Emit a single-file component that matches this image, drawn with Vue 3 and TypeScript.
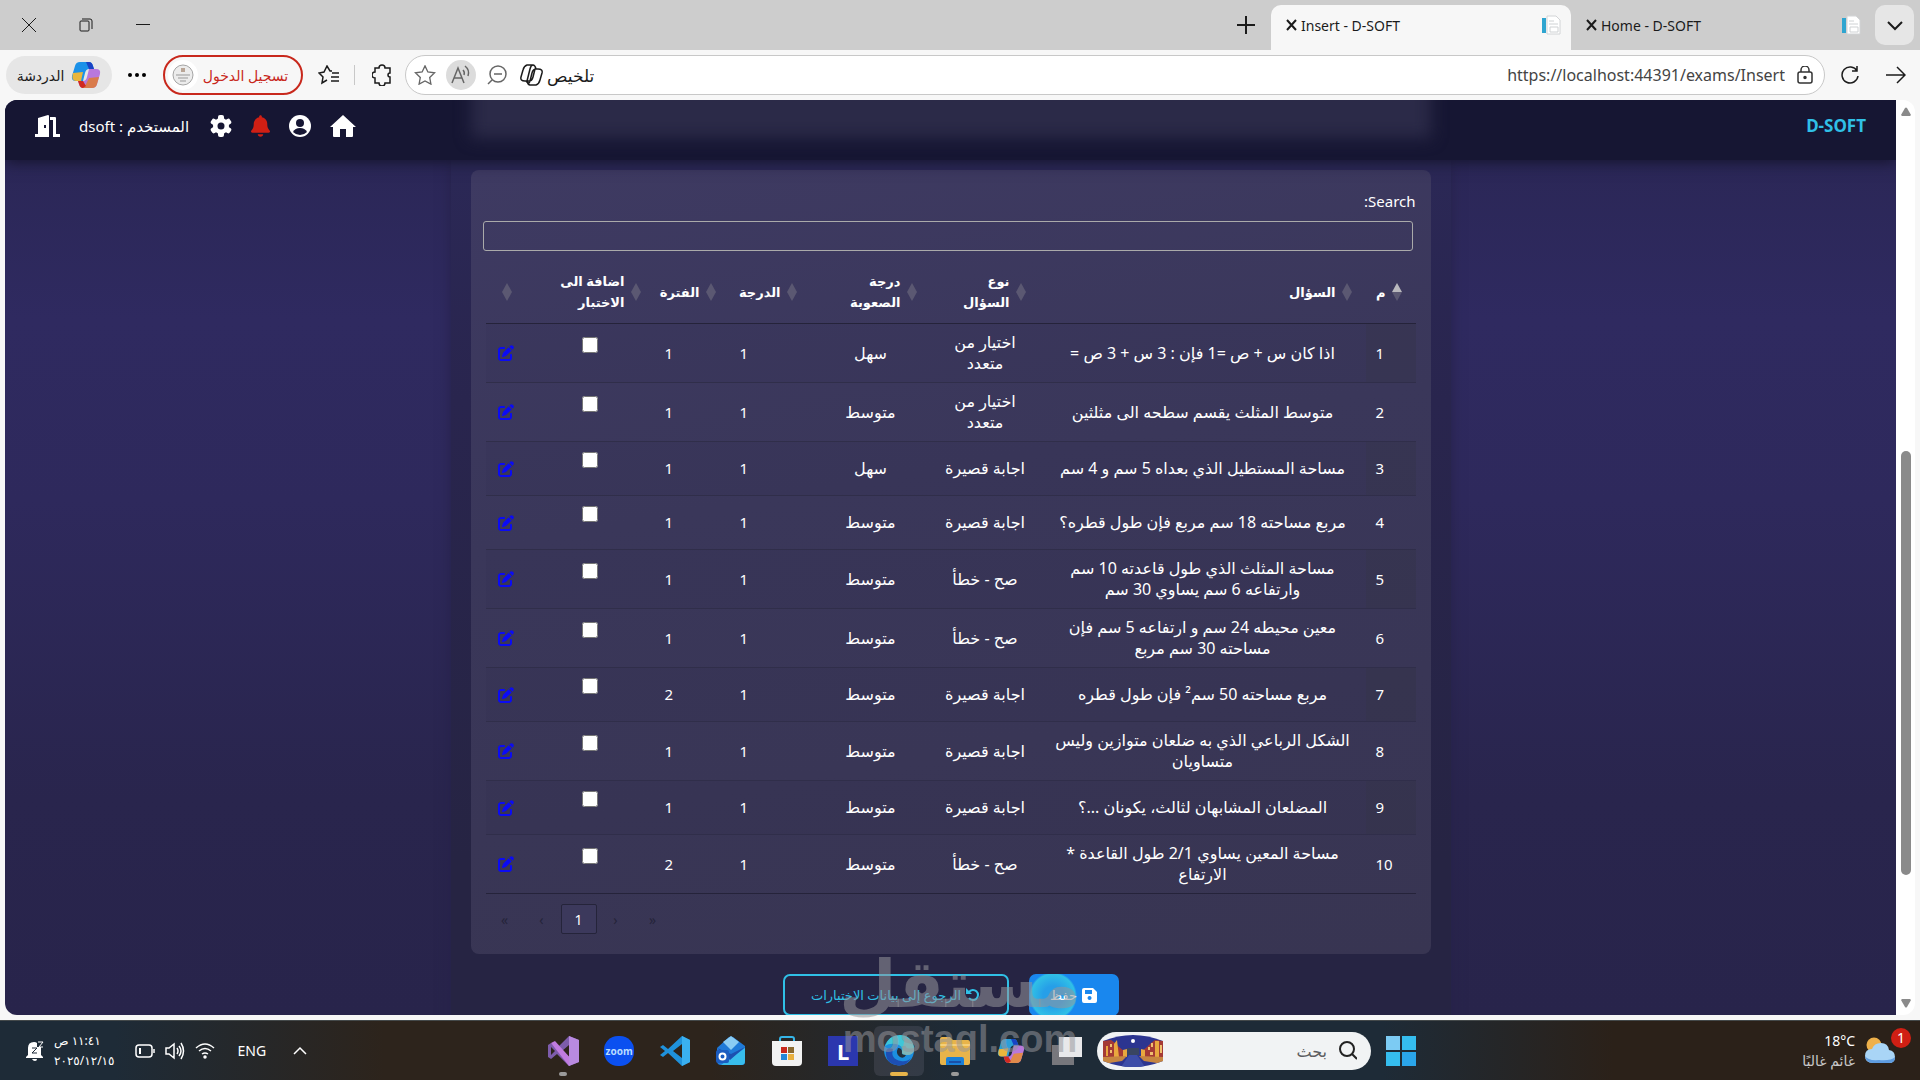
<script setup lang="ts">
interface Question {
  id: number
  text: string
  type: string
  level: string
  degree: number
  period: number
}

const choice = 'اختيار من\nمتعدد'
const short = 'اجابة قصيرة'
const trueFalse = 'صح - خطأ'
const medium = 'متوسط'
const easy = 'سهل'

const questions: Question[] = [
  { id: 1, text: 'اذا كان س + ص =1 فإن : 3 س + 3 ص =', type: choice, level: easy, degree: 1, period: 1 },
  { id: 2, text: 'متوسط المثلث يقسم سطحه الى مثلثين', type: choice, level: medium, degree: 1, period: 1 },
  { id: 3, text: 'مساحة المستطيل الذي بعداه 5 سم و 4 سم', type: short, level: easy, degree: 1, period: 1 },
  { id: 4, text: 'مربع مساحته 18 سم مربع فإن طول قطره؟', type: short, level: medium, degree: 1, period: 1 },
  { id: 5, text: 'مساحة المثلث الذي طول قاعدته 10 سم\nوارتفاعه 6 سم يساوي 30 سم', type: trueFalse, level: medium, degree: 1, period: 1 },
  { id: 6, text: 'معين محيطه 24 سم و ارتفاعه 5 سم فإن\nمساحته 30 سم مربع', type: trueFalse, level: medium, degree: 1, period: 1 },
  { id: 7, text: 'مربع مساحته 50 سم² فإن طول قطره', type: short, level: medium, degree: 1, period: 2 },
  { id: 8, text: 'الشكل الرباعي الذي به ضلعان متوازين وليس\nمتساويان', type: short, level: medium, degree: 1, period: 1 },
  { id: 9, text: 'المضلعان المشابهان لثالث، يكونان ...؟', type: short, level: medium, degree: 1, period: 1 },
  { id: 10, text: 'مساحة المعين يساوي 2/1 طول القاعدة *\nالارتفاع', type: trueFalse, level: medium, degree: 1, period: 2 },
]

const headers: string[] = ['م', 'السؤال', 'نوع\nالسؤال', 'درجة\nالصعوبة', 'الدرجة', 'الفترة', 'اضافة الى\nالاختبار', '']
const tabs = [
  { title: 'Home - D-SOFT', active: false },
  { title: 'Insert - D-SOFT', active: true },
]
</script>

<template>
  <div class="desktop" dir="rtl">
    <header class="tabbar">
      <button class="tab-menu" aria-label="Tabs">
        <svg width="18" height="18" viewBox="0 0 18 18" class="line"><path d="M2 6l7 7 7-7" /></svg>
      </button>
      <div v-for="tab in tabs" :key="tab.title" class="tab" :class="{ active: tab.active }">
        <svg width="20" height="20" viewBox="0 0 20 20">
          <path d="M6 1h9l4 4v14H6z" fill="#fff" stroke="#d2d4d6" />
          <rect x="1" y="3" width="4" height="15" fill="#2fa5d0" />
          <path d="M8 6h5M8 9h9M9 12h8v5H9z" fill="none" stroke="#cfd2d4" />
        </svg>
        <span class="tab-title" dir="ltr">{{ tab.title }}</span>
        <button class="tab-close" aria-label="Close tab">
          <svg width="11" height="12" viewBox="0 0 11 12" class="line"><path d="M1 1l9 10M10 1L1 11" /></svg>
        </button>
      </div>
      <button class="new-tab" aria-label="New tab">
        <svg width="18" height="18" viewBox="0 0 18 18" class="line"><path d="M9 0v18M0 9h18" /></svg>
      </button>
      <div class="window-controls">
        <button aria-label="Minimize"><svg width="14" height="14" viewBox="0 0 14 14" class="line thin"><path d="M0 6.500h14" /></svg></button>
        <button aria-label="Restore"><svg width="14" height="14" viewBox="0 0 14 14" class="line thin"><rect x="1" y="3" width="9" height="10" rx="1" /><path d="M3 1h8q2 0 2 2v8" /></svg></button>
        <button aria-label="Close"><svg width="14" height="14" viewBox="0 0 14 14" class="line thin"><path d="M0 0l14 14M14 0L0 14" /></svg></button>
      </div>
    </header>

    <div class="toolbar">
      <button class="tool" aria-label="Forward">
        <svg width="20" height="18" viewBox="0 0 20 18" class="line"><path d="M0 9h19M11 1l8 8-8 8" /></svg>
      </button>
      <button class="tool reload" aria-label="Reload">
        <svg width="18" height="20" viewBox="0 0 18 20" class="line"><path d="M16 6A8 8 0 1 0 17 11M16 1v5h-5" /></svg>
      </button>
      <div class="address">
        <svg width="16" height="18" viewBox="0 0 16 18" class="line gray"><rect x="1" y="6" width="14" height="11" rx="2" /><path d="M4 6V4a4 4 0 0 1 8 0v2" /><circle cx="8" cy="11.500" r="1" fill="#333" /></svg>
        <input class="url" dir="ltr" aria-label="Address" value="https://localhost:44391/exams/Insert" />
        <button class="summary">
          <span>تلخيص</span>
          <svg width="23" height="22" viewBox="0 0 23 22" class="line"><path d="M7 1h6q2 0 3 4h2q5 0 4 4l-2 7q-1 4-4 5h-6q-2 0-3-4H5q-5 0-4-4l2-7q1-4 4-5zM13 1q-2 0-3 4L7 17M16 5q-3 0-4 4l-2 8q-1 4-4 0M7 17h2q3 0 4-4l2-8" /></svg>
        </button>
        <button class="addr-icon" aria-label="Zoom"><svg width="20" height="20" viewBox="0 0 20 20" class="line soft"><circle cx="11" cy="9" r="8" /><path d="M7 9h8M5 15l-4 4" /></svg></button>
        <button class="addr-icon round" aria-label="Read aloud"><svg width="20" height="20" viewBox="0 0 20 20" class="line soft"><path d="M1 18L7 3l6 15M3 13h8M12 5q2 2 1 5M14 1q5 4 3 10" /></svg></button>
        <button class="addr-icon" aria-label="Favorite"><svg width="22" height="20" viewBox="0 0 24 23" class="line soft"><path d="M12 1l3.300 7 7.700 1-5.600 5.300 1.400 7.700L12 18.300 5.200 22l1.400-7.700L1 9l7.700-1z" /></svg></button>
      </div>
      <button class="tool" aria-label="Extensions">
        <svg width="20" height="22" viewBox="0 0 20 22" class="line"><path d="M7 4a3 3 0 0 1 6 0h5v5a2 2 0 1 0 0 4v6h-5a3 3 0 0 1-6 0H3v-5a3 3 0 0 1 0-6V4z" /></svg>
      </button>
      <span class="divider"></span>
      <button class="tool" aria-label="Favorites">
        <svg width="22" height="20" viewBox="0 0 22 20" class="line"><path d="M14 6h-2L9 1 6 7l-5 1 4 4-1 6 5-3M14 8h7M13 12h8M13 16h8" /></svg>
      </button>
      <button class="signin">
        <span>تسجيل الدخول</span>
        <svg width="30" height="30" viewBox="0 0 30 30"><circle cx="15" cy="15" r="15" fill="#fff" /><circle cx="15" cy="15" r="10" fill="#ececec" stroke="#a5a5a5" /><path d="M13 8h4v4h-4z" fill="#b9a596" /><path d="M8 15h14M10 18h10M12 21h6" stroke="#999" /></svg>
      </button>
      <button class="tool dots" aria-label="More">
        <svg width="18" height="4" viewBox="0 0 18 4"><circle cx="2" cy="2" r="2" /><circle cx="9" cy="2" r="2" /><circle cx="16" cy="2" r="2" /></svg>
      </button>
      <button class="chat">
        <svg width="30" height="28" viewBox="0 0 30 28">
          <path d="M9 1h9q3 0 4 4l1 3h-5q-3 0-4 4l-2 8H5q-5 0-4-5l3-10q1-4 5-4z" fill="#1b91e8" />
          <path d="M2 12l10-1-2 9H5q-5 0-3-8z" fill="#e9b63c" />
          <path d="M18 1q3 0 4 4l1 3h-5l-3-7z" fill="#1943c4" />
          <path d="M21 27h-9q-3 0-4-4l-1-3h5q3 0 4-4l2-8h7q5 0 4 5l-3 10q-1 4-5 4z" fill="#b878dc" />
          <path d="M28 16l-10 1-4 8-3 2h10q4 0 5-4z" fill="#d97b4b" />
          <path d="M7 20h5l3 5-3 2q-3 0-4-4z" fill="#d02a20" />
        </svg>
        <span>الدردشة</span>
      </button>
    </div>

    <div class="frame">
      <div class="page">
        <nav class="navbar">
          <a class="brand" href="#" dir="ltr">D-SOFT</a>
          <div class="nav-items">
            <a href="#" aria-label="الرئيسية"><svg width="26" height="22" viewBox="0 0 26 22" fill="#fff"><path d="M13 0l13 12h-3v9q0 1-1 1h-6v-8h-6v8H4q-1 0-1-1v-9H0z" /></svg></a>
            <a href="#" aria-label="الحساب"><svg width="22" height="22" viewBox="0 0 22 22"><circle cx="11" cy="11" r="11" fill="#fff" /><circle cx="11" cy="8" r="4" fill="#161633" /><path d="M4 17q2-4 7-4t7 4q-3 3-7 3t-7-3z" fill="#161633" /></svg></a>
            <a href="#" aria-label="التنبيهات"><svg width="19" height="22" viewBox="0 0 448 512" fill="#d01f14"><path d="M224 0c-17.700 0-32 14.300-32 32V51.200C119 66 64 130.600 64 208v18.800c0 47-17.300 92.400-48.500 127.600l-7.400 8.300c-8.400 9.400-10.400 22.900-5.300 34.400S19.400 416 32 416H416c12.600 0 24-7.400 29.200-18.900s3.100-25-5.300-34.400l-7.400-8.300C401.300 319.200 384 273.900 384 226.800V208c0-77.400-55-142-128-156.800V32c0-17.700-14.300-32-32-32zm45.300 493.300c12-12 18.700-28.300 18.700-45.300H160c0 17 6.700 33.300 18.700 45.300s28.300 18.700 45.300 18.700 33.300-6.700 45.300-18.700z" /></svg></a>
            <a href="#" aria-label="الاعدادات"><svg width="22" height="22" viewBox="0 0 22 22"><g fill="#fff"><circle cx="11" cy="11" r="8" /><rect x="8" y="0" width="6" height="22" rx="2" /><rect x="8" y="0" width="6" height="22" rx="2" transform="rotate(60 11 11)" /><rect x="8" y="0" width="6" height="22" rx="2" transform="rotate(120 11 11)" /></g><circle cx="11" cy="11" r="3.500" fill="#161633" /></svg></a>
            <span class="user">المستخدم : dsoft</span>
            <a href="#" aria-label="خروج"><svg width="25" height="22" viewBox="0 0 25 22" fill="#fff"><path d="M3 3l10-3q1 0 1 1v21H0v-3h3zM9 10v3h2v-3z" fill-rule="evenodd" /><path d="M15 2h5q1 0 1 1v16h4v3h-7V5h-3z" /></svg></a>
          </div>
        </nav>

        <main class="container">
          <section class="card">
            <label class="search-label" for="search">Search:</label>
            <input id="search" class="search" type="search" />
            <table>
              <colgroup>
                <col class="c-id" /><col /><col class="c-type" /><col class="c-level" /><col class="c-degree" /><col class="c-period" /><col class="c-add" /><col class="c-edit" />
              </colgroup>
              <thead>
                <tr>
                  <th v-for="(h, i) in headers" :key="i" scope="col">
                    <div class="th-inner">
                      <svg width="10" height="18" viewBox="0 0 10 18"><path d="M0 9L5 0l5 9z" :fill="i === 0 ? '#b9b8bd' : '#5b5872'" /><path d="M0 9l5 9 5-9z" fill="#5b5872" /></svg>
                      <span>{{ h }}</span>
                    </div>
                  </th>
                </tr>
              </thead>
              <tbody>
                <tr v-for="q in questions" :key="q.id">
                  <td class="num">{{ q.id }}</td>
                  <td>{{ q.text }}</td>
                  <td>{{ q.type }}</td>
                  <td>{{ q.level }}</td>
                  <td class="num">{{ q.degree }}</td>
                  <td class="num">{{ q.period }}</td>
                  <td><div class="check"><input type="checkbox" :aria-label="`اضافة السؤال ${q.id}`" /></div></td>
                  <td class="edit">
                    <a href="#" :aria-label="`تعديل السؤال ${q.id}`"><svg width="16" height="16" viewBox="0 0 512 512" fill="#0b0bf4"><path d="M471.600 21.700c-21.900-21.900-57.300-21.900-79.200 0L362.300 51.700l97.900 97.900 30.100-30.100c21.900-21.900 21.900-57.300 0-79.200L471.600 21.700zm-299.200 220c-6.100 6.100-10.800 13.600-13.500 21.900l-29.600 88.800c-2.900 8.600-.6 18.100 5.800 24.600s15.900 8.700 24.600 5.800l88.800-29.600c8.200-2.700 15.700-7.400 21.900-13.500L437.700 172.300 339.700 74.300 172.400 241.700zM96 64C43 64 0 107 0 160V416c0 53 43 96 96 96H352c53 0 96-43 96-96V320c0-17.700-14.300-32-32-32s-32 14.300-32 32v96c0 17.700-14.300 32-32 32H96c-17.700 0-32-14.300-32-32V160c0-17.700 14.300-32 32-32h96c17.700 0 32-14.300 32-32s-14.300-32-32-32H96z" /></svg></a>
                  </td>
                </tr>
              </tbody>
            </table>
            <div class="pager" dir="ltr">
              <button disabled>«</button>
              <button disabled>‹</button>
              <button class="current">1</button>
              <button disabled>›</button>
              <button disabled>»</button>
            </div>
          </section>
          <div class="actions">
            <button class="save">
              <svg width="15" height="15" viewBox="0 0 15 15"><path d="M2 0h9l4 4v9q0 2-2 2H2q-2 0-2-2V2q0-2 2-2zM3 2v4h7V2zM7.500 8a2 2 0 1 0 .1 0z" fill="#fff" fill-rule="evenodd" /></svg>
              <span>حفظ</span>
            </button>
            <button class="back">
              <svg width="14" height="14" viewBox="0 0 14 14"><path d="M3 4a5 5 0 1 1 0 6" fill="none" stroke="#30c0e6" stroke-width="2" /><path d="M0 0v6h6z" fill="#30c0e6" /></svg>
              <span>الرجوع إلى بيانات الاختبارات</span>
            </button>
          </div>
        </main>
      </div>
      <div class="scrollbar">
        <svg width="10" height="9" viewBox="0 0 10 9" fill="#8a8a8a"><path d="M4 1q1-1 2 0l4 7-1 1H1L0 8z" /></svg>
        <div class="track"><div class="thumb"></div></div>
        <svg width="10" height="9" viewBox="0 0 10 9" fill="#8a8a8a"><path d="M4 8q1 1 2 0l4-7-1-1H1L0 1z" /></svg>
      </div>
    </div>

    <footer class="taskbar">
      <div class="weather">
        <div class="weather-icon">
          <svg width="30" height="27" viewBox="0 0 30 27"><circle cx="9" cy="8" r="7.500" fill="#eeb04a" /><path d="M8 26q-8 0-8-7t7-7q2-6 9-6t8 7q6 1 6 7t-6 6z" fill="#a9d5f6" /><path d="M0 19q3 5 14 4 12 1 16-3 0 6-6 6H8q-7 0-8-7z" fill="#5e9ce0" /></svg>
          <span class="badge">1</span>
        </div>
        <div class="weather-text"><span dir="ltr">18°C</span><span class="muted">غائم غالبًا</span></div>
      </div>

      <div class="apps">
        <button aria-label="Start"><svg width="30" height="30" viewBox="0 0 30 30"><path d="M0 0h14v14H0z" fill="#7ccbf3" /><path d="M16 0h14v14H16zM0 16h14v14H0z" fill="#35bdee" /><path d="M16 16h14v14H16z" fill="#2aa5ea" /></svg></button>
        <div class="task-search">
          <svg width="18" height="19" viewBox="0 0 18 19" fill="none" stroke="#222" stroke-width="2"><circle cx="8" cy="8" r="7" /><path d="M13 13l5 5" /></svg>
          <input aria-label="بحث" placeholder="بحث" />
          <svg width="60" height="32" viewBox="0 0 60 32">
            <defs><clipPath id="scene"><path d="M0 6q30-12 60 0v20q-30 12-60 0z" /></clipPath></defs>
            <g clip-path="url(#scene)"><path d="M0 0h60v32H0z" fill="#2c3590" /><circle cx="30" cy="6" r="2" fill="#fff" /><path d="M0 6l8-1 4 3 4 4 5 4v8H0z" fill="#a43a35" /><path d="M60 6l-8-1-4 3-4 4-5 4v8h21z" fill="#a43a35" /><path d="M11 9l3-4 2 17h-5zM52 6h4v18h-4zM20 15l4-1v8h-4zM38 14l4 1v7h-4zM3 11h2v10H3z" fill="#e9a83e" /><path d="M7 9h2v3H7zM7 15h2v3H7zM45 12h2v3h-2zM48 8h2v4h-2zM47 17h3v3h-3zM57 10h2v8h-2z" fill="#f0c070" /><path d="M24 13h12v7H24z" fill="#394562" /><path d="M0 22l24-1-5 5-19 3zM60 22l-24-1 5 5 19 3z" fill="#c78641" /><path d="M26 20h8l8 12H18z" fill="#3d4da8" /></g>
          </svg>
        </div>
        <button aria-label="Task view"><svg width="30" height="28" viewBox="0 0 30 28"><rect x="0" y="8" width="22" height="20" fill="#77777c" /><rect x="7" y="0" width="23" height="20" fill="#e8e8ea" /></svg></button>
        <button aria-label="Copilot"><svg width="28" height="26" viewBox="0 0 30 28"><path d="M9 1h9q3 0 4 4l1 3h-5q-3 0-4 4l-2 8H5q-5 0-4-5l3-10q1-4 5-4z" fill="#2b9fd8" /><path d="M2 12l10-1-2 9H5q-5 0-3-8z" fill="#e9b63c" /><path d="M18 1q3 0 4 4l1 3h-5l-3-7z" fill="#1943c4" /><path d="M21 27h-9q-3 0-4-4l-1-3h5q3 0 4-4l2-8h7q5 0 4 5l-3 10q-1 4-5 4z" fill="#b878dc" /><path d="M28 16l-10 1-4 8-3 2h10q4 0 5-4z" fill="#e08a4b" /><path d="M7 20h5l3 5-3 2q-3 0-4-4z" fill="#d02a20" /></svg></button>
        <button class="running" aria-label="Explorer"><svg width="30" height="28" viewBox="0 0 30 28"><path d="M0 2q0-2 2-2h8l3 3h15q2 0 2 2v21q0 2-2 2H2q-2 0-2-2z" fill="#e8b44a" /><path d="M0 7h30v2H0z" fill="#f4cf79" /><path d="M6 28v-6q0-2 2-2h14q2 0 2 2v6z" fill="#1a80d8" /><path d="M9 24h12v2H9z" fill="#1a50a8" /></svg></button>
        <button class="running current-app" aria-label="Edge"><svg width="32" height="31" viewBox="0 0 32 31"><circle cx="16" cy="15.500" r="15" fill="#1b8fe0" /><path d="M2 11Q6 0 17 0t14 12q1 8-8 8-5 0-4-3 1-7-6-8T2 11z" fill="#3fc6d8" /><path d="M22 2q9 4 9 12 0 6-7 6-5 0-5-3l1-5z" fill="#7fb5b8" /><path d="M10 14q-3 10 8 12 6 1 10-3-4 8-13 7.500Q4 29 3 20t7-6z" fill="#1d4fb4" /><path d="M19 17q-1 3 4 3-2 4-6 2-5-3-2-9 4 0 4 4z" fill="#24303c" /></svg></button>
        <button aria-label="L"><span class="tile">L</span></button>
        <button aria-label="Store"><svg width="30" height="30" viewBox="0 0 30 30"><path d="M8 7V3q0-2 2-2h10q2 0 2 2v4" fill="none" stroke="#35b5e8" stroke-width="2" /><path d="M0 5h30v21q0 4-4 4H4q-4 0-4-4z" fill="#f2f2f2" /><path d="M9 11h6v6H9z" fill="#c8281c" /><path d="M16 11h6v6h-6z" fill="#8a6a30" /><path d="M9 18h6v6H9z" fill="#2587d8" /><path d="M16 18h6v6h-6z" fill="#e8b040" /></svg></button>
        <button aria-label="Outlook"><svg width="30" height="30" viewBox="0 0 30 30"><path d="M1 12L13 1q2-1 4 0l12 9v16q0 3-3 3H5q-4 0-4-4z" fill="#1f7ad8" /><path d="M7 6l8-6 8 6-8 8z" fill="#8accf4" /><path d="M29 12L5 29h20q4 0 4-4z" fill="#38bdec" /><path d="M1 12l14 6 14-7-15 13z" fill="#1c50b0" /><rect x="0" y="14" width="13" height="13" rx="2" fill="#1b5cc0" /><circle cx="6.500" cy="20.500" r="3" fill="none" stroke="#fff" stroke-width="2" /></svg></button>
        <button aria-label="VS Code"><svg width="30" height="30" viewBox="0 0 30 30"><path d="M22 0l8 4v22l-8 4L8 17l-5 4-3-2 5-4-5-4 3-2 5 4zM22 8l-9 7 9 7z" fill="#1f92dc" fill-rule="evenodd" /><path d="M22 0l8 4v22l-8 4z" fill="#3ab0f0" /></svg></button>
        <button aria-label="Zoom"><span class="zoom">zoom</span></button>
        <button class="running" aria-label="Visual Studio"><svg width="31" height="30" viewBox="0 0 31 30"><path d="M21 0l10 4v22l-10 4L9 18l-6 5-3-2V9l3-2 6 5zM21 9l-7 6 7 6zM3 11v8l4-4z" fill="#7d5cab" fill-rule="evenodd" /><path d="M3 7l4-2 18 20-4 5z" fill="#c07be0" /><path d="M21 0l10 4v22l-10 4z" fill="#b98ae0" /></svg></button>
      </div>

      <div class="tray">
        <svg width="14" height="9" viewBox="0 0 14 9" class="tray-line"><path d="M1 8l6-6 6 6" /></svg>
        <span class="lang">ENG</span>
        <div class="status">
          <svg width="20" height="16" viewBox="0 0 20 16" class="tray-line"><path d="M1 5q9-8 18 0M4 8q6-5 12 0M7 11q3-2 6 0" /><circle cx="10" cy="14" r="1" fill="#fff" /></svg>
          <svg width="20" height="18" viewBox="0 0 20 18" class="tray-line"><path d="M1 6h3l5-4v14l-5-4H1zM12 6q2 3 0 6M14 4q4 5 0 10M16 1q5 8 0 16" /></svg>
          <svg width="20" height="14" viewBox="0 0 20 14" class="tray-line"><rect x="1" y="1" width="16" height="12" rx="3" /><path d="M19 5v4" /><rect x="4" y="4" width="2" height="6" fill="#fff" stroke="none" /><path d="M5 4v6" /></svg>
        </div>
        <div class="clock"><span>١١:٤١ ص</span><span>٢٠٢٥/١٢/١٥</span></div>
        <svg width="18" height="20" viewBox="0 0 18 20"><path d="M2 7q0-6 6-6 2 0 3 1v4h4v8l2 2v1H0v-1l2-2z" fill="#fff" /><path d="M6 18h5q0 2-2 2t-3-2z" fill="#fff" /><path d="M12 1h5l-4 5h4" fill="none" stroke="#fff" /><path d="M6 7h5l-5 5h5" fill="none" stroke="#1f2b38" /></svg>
      </div>
    </footer>

    <div class="watermark" aria-hidden="true">
      <span class="wm-ar">مستقل</span>
      <span class="wm-en" dir="ltr">mostaql.com</span>
    </div>
  </div>
</template>

<style>
body {
  margin: 0;
  background: #f7f7f7;
}
</style>

<style scoped>
.desktop {
  position: relative;
  display: flex;
  flex-direction: column;
  height: 100vh;
  overflow: hidden;
  background: #f7f7f7;
  font-family: "Noto Sans", "DejaVu Sans", sans-serif;
  font-size: 14px;
  color: #1b1b1b;
}
button {
  display: flex;
  align-items: center;
  justify-content: center;
  padding: 0;
  border: 0;
  background: none;
  font: inherit;
  color: inherit;
}
a {
  display: flex;
  text-decoration: none;
}
svg {
  display: block;
  flex: none;
}
.line {
  fill: none;
  stroke: #1b1b1b;
  stroke-width: 2;
}
.line.thin {
  stroke-width: 1;
}
.toolbar .line {
  stroke-width: 1.5;
}
.line.gray {
  stroke: #333;
}
.line.soft {
  stroke: #666;
}

.tabbar {
  display: flex;
  flex: 0 0 50px;
  align-items: center;
  padding-inline-start: 6px;
  background: #cdcdcd;
}
.tab-menu {
  width: 39px;
  height: 40px;
  border-radius: 10px;
  background: #e6e6e6;
}
.tab {
  display: flex;
  align-items: center;
  box-sizing: border-box;
  width: 300px;
  height: 45px;
  align-self: flex-end;
  padding: 0 10px 5px 15px;
  border-radius: 10px 10px 0 0;
}
.tab:first-of-type {
  margin-inline-start: 4px;
}
.tab.active {
  background: #f7f7f7;
}
.tab-title {
  margin-right: auto;
}
.tab-close {
  margin-right: 4px;
}
.new-tab {
  margin-inline-start: 16px;
}
.window-controls {
  display: flex;
  margin-inline-start: auto;
}
.window-controls button {
  width: 57px;
  height: 50px;
}

.toolbar {
  display: flex;
  flex: 0 0 50px;
  align-items: center;
  padding-inline: 14px 6px;
}
.tool.reload {
  margin-inline: 27px 16px;
}
.address {
  display: flex;
  flex: 1;
  align-items: center;
  box-sizing: border-box;
  height: 40px;
  padding-inline: 11px 4px;
  border: 1px solid #c8c8c8;
  border-radius: 20px;
  background: #fff;
}
.url {
  flex: 1;
  min-width: 0;
  padding: 0;
  margin-right: 12px;
  border: 0;
  outline: 0;
  background: none;
  font: inherit;
  font-size: 16px;
  text-align: right;
  color: #444;
}
.summary {
  gap: 4px;
  margin-inline-end: 2px;
  font-size: 17px;
}
.addr-icon {
  width: 30px;
  height: 30px;
  margin-inline-start: 6px;
}
.addr-icon.round {
  border-radius: 15px;
  background: #dcdcdc;
}
.address + .tool {
  margin-inline-start: 13px;
}
.divider {
  width: 1px;
  height: 20px;
  margin-inline: 17px 14px;
  background: #c8c8c8;
}
.signin {
  box-sizing: border-box;
  gap: 5px;
  width: 140px;
  height: 40px;
  margin-inline-start: 15px;
  padding-inline-start: 10px;
  border: 2px solid #c8281c;
  border-radius: 20px;
  color: #c8281c;
}
.dots {
  margin-inline: 17px 16px;
}
.chat {
  gap: 7px;
  width: 106px;
  height: 38px;
  border-radius: 19px;
  background: #e6e6e6;
}

.frame {
  display: flex;
  flex: 1;
  min-height: 0;
  margin: 0 5px 5px;
  overflow: hidden;
  border-radius: 12px;
  background: #fff;
  direction: ltr;
}
.page {
  display: flex;
  flex: 1;
  flex-direction: column;
  min-width: 0;
  overflow: hidden;
  direction: rtl;
  background: linear-gradient(#2b2757 60px, #2f2a60 220px, #2e295c 400px, #29254d 700px, #28244b);
  color: #fff;
}
.scrollbar {
  display: flex;
  flex: 0 0 19px;
  flex-direction: column;
  align-items: center;
  box-sizing: border-box;
  padding: 7px 0;
}
.track {
  flex: 1;
  display: flex;
  flex-direction: column;
}
.thumb {
  width: 10px;
  height: 48%;
  margin-top: 335px;
  border-radius: 5px;
  background: #8a8a8a;
}

.navbar {
  position: relative;
  z-index: 1;
  display: flex;
  flex: 0 0 60px;
  align-items: flex-start;
  justify-content: space-between;
  box-sizing: border-box;
  padding: 14px 30px 0;
  background: #161633;
  box-shadow: 0 2px 14px #14132c;
}
.navbar::before {
  content: "";
  position: absolute;
  top: -20px;
  left: 50%;
  width: 960px;
  height: 58px;
  margin-left: -480px;
  background: #2b2a48;
  filter: blur(8px);
  clip-path: inset(20px -30px -30px);
}
.brand {
  line-height: 24px;
  font-size: 17px;
  font-weight: 700;
  color: #30c0e6;
}
.nav-items {
  display: flex;
  align-items: center;
  gap: 19px;
}
.user {
  font-size: 15px;
  line-height: 24px;
}
.nav-items .user {
  margin-inline: 2px 0;
}

.container {
  flex: none;
  box-sizing: border-box;
  width: 100%;
  max-width: 1000px;
  margin: 0 auto;
  padding: 10px 20px 40px;
  background: linear-gradient(#2b2856, #29254e 240px, #262443 700px);
  box-shadow: 0 0 12px #26224a;
}
.card {
  box-sizing: border-box;
  height: 784px;
  padding: 20px 15px 0;
  border-radius: 8px;
  background: linear-gradient(170deg, #3e3a62, #3a375a 40%, #383552);
}
.search-label {
  display: block;
  font-size: 15px;
  line-height: 22px;
}
.search {
  display: block;
  box-sizing: border-box;
  width: 100%;
  height: 30px;
  margin: 9px 3px 0 -3px;
  border: 1px solid #aaa;
  border-radius: 3px;
  outline: 0;
  background: none;
  color: #fff;
}
table {
  width: 100%;
  margin-top: 10px;
  table-layout: fixed;
  border-collapse: separate;
  border-spacing: 0;
  line-height: 21px;
  white-space: pre;
}
.c-id { width: 50px; }
.c-type { width: 109px; }
.c-level { width: 120px; }
.c-degree { width: 81px; }
.c-period { width: 75px; }
.c-add { width: 129px; }
.c-edit { width: 40px; }
th {
  padding: 10px 14px;
  border-bottom: 1px solid #25233a;
  text-align: right;
  font-size: 13px;
  font-weight: 700;
}
.th-inner {
  display: flex;
  align-items: center;
  gap: 6px;
}
td {
  padding: 8px 10px;
  border-bottom: 1px solid #302e4a;
  text-align: center;
  font-size: 16px;
}
tbody tr:last-child td {
  border-bottom-color: #25233a;
}
tbody tr:nth-child(odd) td {
  background: rgba(30, 30, 40, 0.04);
}
tbody tr:nth-child(odd) td:first-child {
  background: rgba(45, 45, 55, 0.2);
}
td.num {
  text-align: left;
  font-size: 15px;
}
.check {
  height: 37px;
}
.check input {
  display: block;
  width: 16px;
  height: 16px;
  margin: 0 auto;
  position: relative;
  top: 2px;
}
.edit a {
  justify-content: center;
}
.pager {
  display: flex;
  gap: 1px;
  margin-top: 10px;
  padding-left: 1px;
}
.pager button {
  width: 36px;
  height: 30px;
  color: #25243a;
}
.pager button.current {
  border: 1px solid #25243a;
  border-radius: 2px;
  background: #3c395c;
  color: #fff;
}
.actions {
  display: flex;
  justify-content: center;
  gap: 20px;
  padding-top: 20px;
}
.actions button {
  gap: 5px;
  box-sizing: border-box;
  height: 42px;
  border-radius: 7px;
  font-size: 13px;
}
.save {
  width: 90px;
  background: radial-gradient(circle at 24px 22px, #269fe8 10px, #30c0e6 22px, #1987ee 24px);
}
.actions .back {
  width: 226px;
  border: 2px solid #30c0e6;
  color: #30c0e6;
}

.taskbar {
  display: grid;
  grid-template-columns: 490fr auto 534fr;
  flex: 0 0 60px;
  align-items: center;
  box-sizing: border-box;
  border-top: 1px solid #44494a;
  background: linear-gradient(90deg, #1e2b37 6%, #2d241c 20%, #2d241c 37%, #1e2b37 50%, #1e2b37 72%, #2b2119 84%);
  color: #fff;
}
.weather {
  display: flex;
  gap: 10px;
  align-items: center;
  padding-inline-start: 25px;
}
.weather-icon {
  position: relative;
}
.badge {
  position: absolute;
  top: -9px;
  right: -16px;
  width: 20px;
  border-radius: 10px;
  background: #d01f14;
  line-height: 20px;
  text-align: center;
}
.weather-text,
.clock {
  display: flex;
  flex-direction: column;
  line-height: 20px;
}
.weather-text {
  align-items: flex-start;
}
.muted {
  color: #c8c8c8;
}
.apps {
  display: flex;
  align-items: center;
}
.apps button {
  position: relative;
  width: 56px;
  height: 50px;
}
.running::after {
  content: "";
  position: absolute;
  bottom: 0;
  left: 24px;
  width: 8px;
  height: 4px;
  border-radius: 2px;
  background: #9a9a9a;
}
.current-app::before {
  content: "";
  position: absolute;
  inset: 0 3px;
  border-radius: 6px;
  background: rgba(130, 130, 150, 0.2);
}
.current-app::after {
  left: 19px;
  width: 18px;
  background: #e8b44a;
}
.current-app svg {
  position: relative;
}
.task-search {
  display: flex;
  align-items: center;
  box-sizing: border-box;
  width: 274px;
  height: 38px;
  margin-inline: 2px;
  padding-inline: 14px 6px;
  border-radius: 19px;
  background: #f1f3f4;
}
.task-search input {
  flex: 1;
  min-width: 0;
  margin-inline-start: 12px;
  padding: 0;
  border: 0;
  outline: 0;
  background: none;
  font: inherit;
  font-size: 16px;
}
.task-search input::placeholder {
  color: #5c5c60;
  opacity: 1;
}
.tile {
  width: 30px;
  background: #2b37ae;
  font-weight: 700;
  font-size: 22px;
  line-height: 30px;
}
.zoom {
  width: 30px;
  border-radius: 14px;
  background: #0b50f0;
  font-size: 10px;
  font-weight: 700;
  line-height: 30px;
  color: #b8dcff;
}
.tray {
  display: flex;
  align-items: center;
  justify-content: flex-end;
  padding-inline-end: 26px;
}
.tray-line {
  fill: none;
  stroke: #fff;
  stroke-width: 1.5;
}
.lang {
  margin-inline: 27px 23px;
}
.status {
  display: flex;
  align-items: center;
  gap: 10px;
}
.clock {
  align-items: flex-end;
  margin-inline: 20px 10px;
  font-size: 12px;
}

.watermark {
  position: absolute;
  right: 0;
  bottom: 20px;
  left: 0;
  display: flex;
  flex-direction: column;
  align-items: center;
  color: rgba(150, 150, 155, 0.55);
  font-weight: 700;
  pointer-events: none;
}
.wm-ar {
  font-family: "DejaVu Sans", sans-serif;
  font-size: 66px;
  line-height: 66px;
}
.wm-en {
  font-family: "Liberation Sans", sans-serif;
  font-size: 38px;
  line-height: 42px;
}
</style>
